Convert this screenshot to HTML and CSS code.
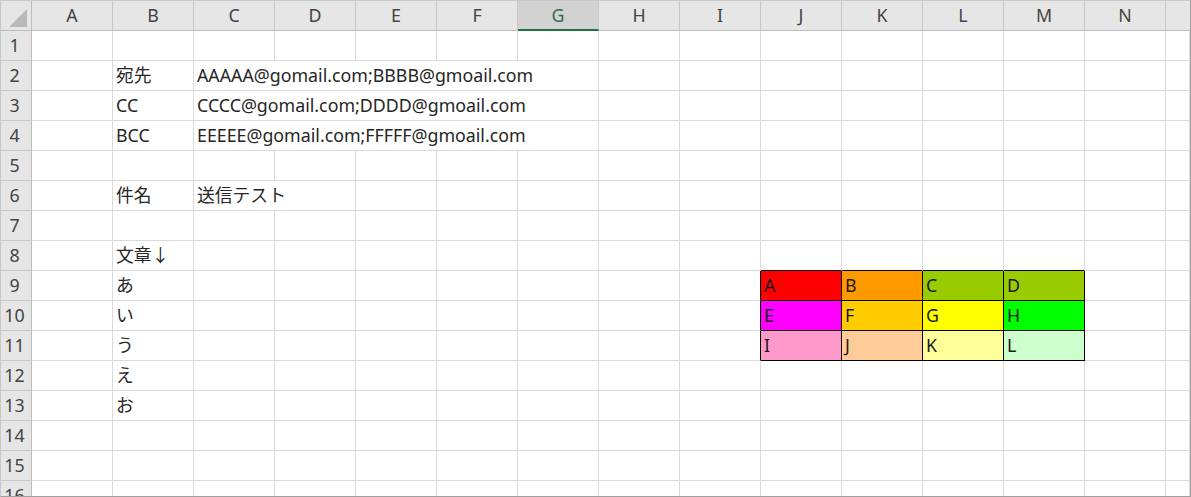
FILE: index.html
```html
<!DOCTYPE html>
<html lang="ja">
<head>
<meta charset="utf-8">
<title>Sheet</title>
<link rel="stylesheet" href="styles.css">
</head>
<body>
<div class="sheet">
  <!-- header row -->
  <div class="corner"><svg width="30" height="29" viewBox="0 0 30 29"><polygon points="26,8 26,26 8,26" fill="#b9b9b9"/></svg></div>
  <div class="ch">A</div><div class="ch">B</div><div class="ch">C</div><div class="ch">D</div><div class="ch">E</div><div class="ch">F</div><div class="ch sel">G</div><div class="ch">H</div><div class="ch">I</div><div class="ch">J</div><div class="ch">K</div><div class="ch">L</div><div class="ch">M</div><div class="ch">N</div><div class="ch last"></div>

  <!-- row 1 -->
  <div class="rh">1</div>
  <div class="c"></div><div class="c"></div><div class="c"></div><div class="c"></div><div class="c"></div><div class="c"></div><div class="c"></div><div class="c"></div><div class="c"></div><div class="c"></div><div class="c"></div><div class="c"></div><div class="c"></div><div class="c"></div><div class="c"></div>

  <!-- row 2 -->
  <div class="rh">2</div>
  <div class="c"></div><div class="c">宛先</div><div class="c span5">AAAAA@gomail.com;BBBB@gmoail.com</div><div class="c"></div><div class="c"></div><div class="c"></div><div class="c"></div><div class="c"></div><div class="c"></div><div class="c"></div><div class="c"></div>

  <!-- row 3 -->
  <div class="rh">3</div>
  <div class="c"></div><div class="c">CC</div><div class="c span5">CCCC@gomail.com;DDDD@gmoail.com</div><div class="c"></div><div class="c"></div><div class="c"></div><div class="c"></div><div class="c"></div><div class="c"></div><div class="c"></div><div class="c"></div>

  <!-- row 4 -->
  <div class="rh">4</div>
  <div class="c"></div><div class="c">BCC</div><div class="c span5">EEEEE@gomail.com;FFFFF@gmoail.com</div><div class="c"></div><div class="c"></div><div class="c"></div><div class="c"></div><div class="c"></div><div class="c"></div><div class="c"></div><div class="c"></div>

  <!-- row 5 -->
  <div class="rh">5</div>
  <div class="c"></div><div class="c"></div><div class="c"></div><div class="c"></div><div class="c"></div><div class="c"></div><div class="c"></div><div class="c"></div><div class="c"></div><div class="c"></div><div class="c"></div><div class="c"></div><div class="c"></div><div class="c"></div><div class="c"></div>

  <!-- row 6 -->
  <div class="rh">6</div>
  <div class="c"></div><div class="c">件名</div><div class="c span2">送信テスト</div><div class="c"></div><div class="c"></div><div class="c"></div><div class="c"></div><div class="c"></div><div class="c"></div><div class="c"></div><div class="c"></div><div class="c"></div><div class="c"></div><div class="c"></div>

  <!-- row 7 -->
  <div class="rh">7</div>
  <div class="c"></div><div class="c"></div><div class="c"></div><div class="c"></div><div class="c"></div><div class="c"></div><div class="c"></div><div class="c"></div><div class="c"></div><div class="c"></div><div class="c"></div><div class="c"></div><div class="c"></div><div class="c"></div><div class="c"></div>

  <!-- row 8 -->
  <div class="rh">8</div>
  <div class="c"></div><div class="c">文章↓</div><div class="c"></div><div class="c"></div><div class="c"></div><div class="c"></div><div class="c"></div><div class="c"></div><div class="c"></div><div class="c top-edge"></div><div class="c top-edge"></div><div class="c top-edge"></div><div class="c top-edge"></div><div class="c"></div><div class="c"></div>

  <!-- row 9 -->
  <div class="rh">9</div>
  <div class="c"></div><div class="c">あ</div><div class="c"></div><div class="c"></div><div class="c"></div><div class="c"></div><div class="c"></div><div class="c"></div><div class="c left-edge"></div><div class="c clr red">A</div><div class="c clr orange">B</div><div class="c clr olive">C</div><div class="c clr olive">D</div><div class="c"></div><div class="c"></div>

  <!-- row 10 -->
  <div class="rh">10</div>
  <div class="c"></div><div class="c">い</div><div class="c"></div><div class="c"></div><div class="c"></div><div class="c"></div><div class="c"></div><div class="c"></div><div class="c left-edge"></div><div class="c clr magenta">E</div><div class="c clr gold">F</div><div class="c clr yellow">G</div><div class="c clr green">H</div><div class="c"></div><div class="c"></div>

  <!-- row 11 -->
  <div class="rh">11</div>
  <div class="c"></div><div class="c">う</div><div class="c"></div><div class="c"></div><div class="c"></div><div class="c"></div><div class="c"></div><div class="c"></div><div class="c left-edge"></div><div class="c clr pink">I</div><div class="c clr peach">J</div><div class="c clr lightyellow">K</div><div class="c clr mint">L</div><div class="c"></div><div class="c"></div>

  <!-- row 12 -->
  <div class="rh">12</div>
  <div class="c"></div><div class="c">え</div><div class="c"></div><div class="c"></div><div class="c"></div><div class="c"></div><div class="c"></div><div class="c"></div><div class="c"></div><div class="c"></div><div class="c"></div><div class="c"></div><div class="c"></div><div class="c"></div><div class="c"></div>

  <!-- row 13 -->
  <div class="rh">13</div>
  <div class="c"></div><div class="c">お</div><div class="c"></div><div class="c"></div><div class="c"></div><div class="c"></div><div class="c"></div><div class="c"></div><div class="c"></div><div class="c"></div><div class="c"></div><div class="c"></div><div class="c"></div><div class="c"></div><div class="c"></div>

  <!-- row 14 -->
  <div class="rh">14</div>
  <div class="c"></div><div class="c"></div><div class="c"></div><div class="c"></div><div class="c"></div><div class="c"></div><div class="c"></div><div class="c"></div><div class="c"></div><div class="c"></div><div class="c"></div><div class="c"></div><div class="c"></div><div class="c"></div><div class="c"></div>

  <!-- row 15 -->
  <div class="rh">15</div>
  <div class="c"></div><div class="c"></div><div class="c"></div><div class="c"></div><div class="c"></div><div class="c"></div><div class="c"></div><div class="c"></div><div class="c"></div><div class="c"></div><div class="c"></div><div class="c"></div><div class="c"></div><div class="c"></div><div class="c"></div>

  <!-- row 16 -->
  <div class="rh">16</div>
  <div class="c"></div><div class="c"></div><div class="c"></div><div class="c"></div><div class="c"></div><div class="c"></div><div class="c"></div><div class="c"></div><div class="c"></div><div class="c"></div><div class="c"></div><div class="c"></div><div class="c"></div><div class="c"></div><div class="c"></div>
</div>
</body>
</html>
```
FILE: styles.css
```css
html, body {
  margin: 0;
  padding: 0;
  background: #ffffff;
}

.sheet {
  width: 1191px;
  height: 497px;
  box-sizing: border-box;
  border: 1px solid #a0a0a0;
  border-top-color: #c8c8c8;
  border-left-color: #c8c8c8;
  overflow: hidden;
  display: grid;
  grid-template-columns: 31px repeat(14, 81px) 1fr;
  grid-template-rows: repeat(17, 30px);
  background: #ffffff;
  font-family: "Noto Sans", "Noto Sans CJK JP", sans-serif;
  font-size: 17.8px;
  color: #262626;
}

.corner {
  background: #e6e6e6;
  border-right: 1px solid #bdbdbd;
  border-bottom: 1px solid #bdbdbd;
  box-sizing: border-box;
}

.corner svg {
  display: block;
}

.ch {
  background: #e6e6e6;
  border-right: 1px solid #c8c8c8;
  border-bottom: 1px solid #bdbdbd;
  box-sizing: border-box;
  text-align: center;
  line-height: 29px;
  color: #444444;
}

.ch.sel {
  background: #d2d2d2;
  border-bottom: 2px solid #217346;
  line-height: 28px;
  color: #2f6b4a;
}

.ch.last {
  border-right: none;
}

.rh {
  background: #e6e6e6;
  border-right: 1px solid #bdbdbd;
  border-bottom: 1px solid #c8c8c8;
  box-sizing: border-box;
  text-align: center;
  padding-right: 3px;
  line-height: 29px;
  color: #444444;
}

.c {
  border-right: 1px solid #dadada;
  border-bottom: 1px solid #dadada;
  box-sizing: border-box;
  padding-left: 3px;
  line-height: 29px;
  white-space: nowrap;
  overflow: visible;
}

.span5 {
  grid-column: span 5;
}

.span2 {
  grid-column: span 2;
}

.top-edge {
  border-bottom-color: #000000;
}

.left-edge {
  border-right-color: #000000;
}

.clr {
  border-right-color: #000000;
  border-bottom-color: #000000;
  color: #1a1a1a;
}

.red { background: #ff0000; }
.orange { background: #ff9900; }
.olive { background: #99cc00; }
.magenta { background: #ff00ff; }
.gold { background: #ffcc00; }
.yellow { background: #ffff00; }
.green { background: #00ff00; }
.pink { background: #ff99cc; }
.peach { background: #ffcc99; }
.lightyellow { background: #ffff99; }
.mint { background: #ccffcc; }
```
